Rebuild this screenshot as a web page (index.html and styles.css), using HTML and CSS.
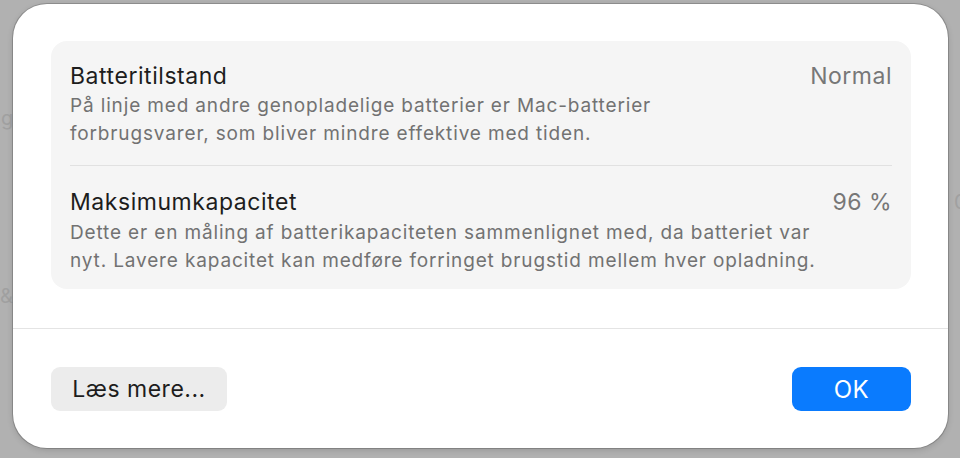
FILE: index.html
```html
<!DOCTYPE html>
<html lang="da">
<head>
<meta charset="utf-8">
<title>Batteritilstand</title>
<link rel="stylesheet" href="styles.css">
</head>
<body>
<div class="backdrop">
  <span class="ghost ghost-g">g</span>
  <span class="ghost ghost-amp">&amp;</span>
  <span class="ghost ghost-0">0</span>
  <div class="dialog">
    <div class="content">
      <div class="card">
        <div class="row">
          <div class="row-head">
            <span class="title">Batteritilstand</span>
            <span class="value">Normal</span>
          </div>
          <p class="desc">På linje med andre genopladelige batterier er Mac-batterier<br>forbrugsvarer, som bliver mindre effektive med tiden.</p>
        </div>
        <div class="sep"></div>
        <div class="row">
          <div class="row-head">
            <span class="title">Maksimumkapacitet</span>
            <span class="value">96 %</span>
          </div>
          <p class="desc">Dette er en måling af batterikapaciteten sammenlignet med, da batteriet var<br>nyt. Lavere kapacitet kan medføre forringet brugstid mellem hver opladning.</p>
        </div>
      </div>
    </div>
    <div class="divider"></div>
    <div class="footer">
      <button class="btn btn-secondary">Læs mere...</button>
      <button class="btn btn-primary">OK</button>
    </div>
  </div>
</div>
</body>
</html>
```
FILE: styles.css
```css
html, body {
  margin: 0;
  padding: 0;
}
body {
  width: 960px;
  height: 458px;
  overflow: hidden;
  background: #b1b1b1;
  font-family: "Inter", "Liberation Sans", sans-serif;
}
.backdrop {
  position: relative;
  width: 960px;
  height: 458px;
  padding: 4px 0 0 13px;
  box-sizing: border-box;
}
.ghost {
  position: absolute;
  color: #a0a0a0;
  font-size: 20px;
}
.ghost-g { left: 1px; top: 106px; }
.ghost-amp { left: 0px; top: 284px; }
.ghost-0 { left: 954px; top: 190px; }
.dialog {
  position: relative;
  width: 935px;
  height: 444px;
  box-sizing: border-box;
  background: #ffffff;
  border-radius: 34px;
  box-shadow: 0 0 0 1px rgba(0,0,0,0.18), 0 2px 6px rgba(0,0,0,0.15);
  display: flex;
  flex-direction: column;
}
.content {
  padding: 37px 37px 0 38px;
  height: 324px;
  box-sizing: border-box;
}
.card {
  background: #f5f5f5;
  border-radius: 16px;
  padding: 0 19px;
  height: 248px;
  box-sizing: border-box;
}
.row-head {
  display: flex;
  justify-content: space-between;
  align-items: baseline;
}
.row:first-child {
  padding-top: 21px;
}
.title {
  font-size: 23px;
  letter-spacing: 0.55px;
  color: #1d1d1d;
  line-height: 28px;
}
.value {
  font-size: 23px;
  letter-spacing: 0.5px;
  color: #777777;
  line-height: 28px;
}
.desc {
  margin: 2px 0 0 0;
  font-size: 19px;
  letter-spacing: 0.85px;
  line-height: 28px;
  color: #727272;
}
.sep {
  height: 1px;
  background: #e1e1e1;
  margin: 17px 0 22px 0;
}
.row:last-child .desc {
  margin-top: 3px;
}
.divider {
  height: 1px;
  background: #e4e4e4;
}
.footer {
  display: flex;
  justify-content: space-between;
  padding: 38px 37px 0 38px;
}
.btn {
  height: 44px;
  border: none;
  border-radius: 9px;
  font-family: inherit;
  font-size: 23px;
  letter-spacing: 0.5px;
  padding: 0;
}
.btn-secondary {
  width: 176px;
  background: #ececec;
  color: #1d1d1d;
}
.btn-primary {
  width: 119px;
  background: #0a7bfe;
  color: #ffffff;
  font-size: 24px;
}
```
